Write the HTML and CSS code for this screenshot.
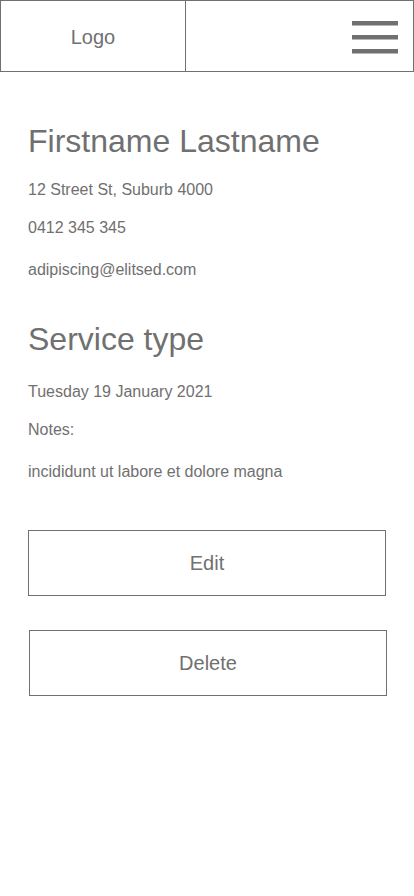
FILE: index.html
```html
<!DOCTYPE html>
<html lang="en">
<head>
<meta charset="utf-8">
<title>Booking details</title>
<link rel="stylesheet" href="styles.css">
</head>
<body>
<header class="topbar">
  <div class="logo">Logo</div>
  <button class="menu" aria-label="Menu">
    <svg width="46" height="33" viewBox="0 0 46 33" aria-hidden="true">
      <rect x="0" y="0" width="46" height="4.5" fill="#707070"/>
      <rect x="0" y="14" width="46" height="4.5" fill="#707070"/>
      <rect x="0" y="28" width="46" height="4.5" fill="#707070"/>
    </svg>
  </button>
</header>
<main class="content">
  <h1 class="name">Firstname Lastname</h1>
  <p class="line address">12 Street St, Suburb 4000</p>
  <p class="line phone">0412 345 345</p>
  <p class="line email">adipiscing@elitsed.com</p>
  <h2 class="service">Service type</h2>
  <p class="line date">Tuesday 19 January 2021</p>
  <p class="line notes-label">Notes:</p>
  <p class="line notes">incididunt ut labore et dolore magna</p>
  <div class="actions">
    <button class="btn edit">Edit</button>
    <button class="btn delete">Delete</button>
  </div>
</main>
</body>
</html>
```
FILE: styles.css
```css
html, body {
  margin: 0;
  padding: 0;
  background: #ffffff;
}
body {
  font-family: "Liberation Sans", Arial, sans-serif;
  color: #707070;
  width: 414px;
}
.topbar {
  display: flex;
  height: 72px;
  box-sizing: border-box;
  border: 1px solid #707070;
}
.logo {
  width: 185px;
  box-sizing: border-box;
  border-right: 1px solid #707070;
  display: flex;
  align-items: center;
  justify-content: center;
  font-size: 20px;
  padding-top: 2px;
}
.menu {
  margin-left: auto;
  background: none;
  border: 0;
  padding: 20px 15px 0 0;
  align-self: flex-start;
  display: flex;
  cursor: pointer;
}
.content {
  padding: 0 28px;
}
.name, .service {
  font-weight: normal;
  font-size: 32px;
  line-height: 37px;
  margin: 0;
}
.name {
  margin-top: 51px;
}
.service {
  margin-top: 41px;
}
.line {
  font-size: 16px;
  line-height: 20px;
  margin: 0;
}
.address { margin-top: 20px; }
.phone { margin-top: 18px; }
.email { margin-top: 22px; }
.date { margin-top: 24px; }
.notes-label { margin-top: 18px; }
.notes { margin-top: 22px; }
.actions {
  display: flex;
  flex-direction: column;
  gap: 34px;
  margin-top: 48px;
}
.btn {
  font-family: "Liberation Sans", Arial, sans-serif;
  color: #707070;
  background: #fff;
  border: 1px solid #707070;
  height: 66px;
  width: 358px;
  font-size: 20px;
  padding: 0;
  cursor: pointer;
}
.delete {
  margin-left: 1px;
}
```
